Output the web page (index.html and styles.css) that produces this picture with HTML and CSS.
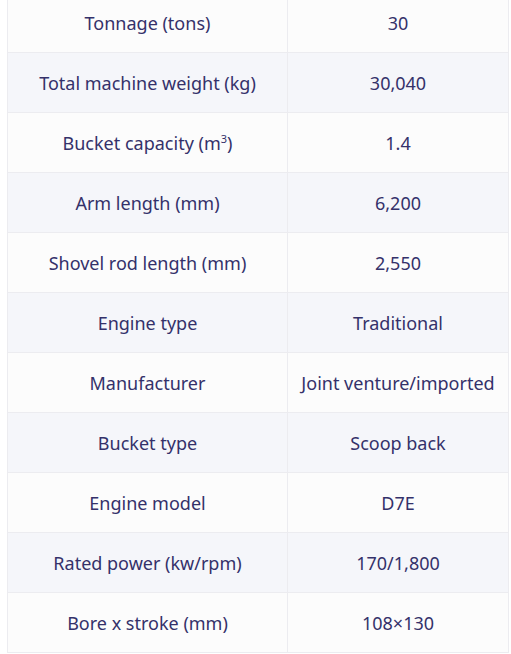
FILE: index.html
```html
<!DOCTYPE html>
<html>
<head>
<meta charset="utf-8">
<link rel="stylesheet" href="styles.css">
</head>
<body>
<table class="specs">
<tbody>
<tr><td>Tonnage (tons)</td><td>30</td></tr>
<tr class="alt"><td>Total machine weight (kg)</td><td>30,040</td></tr>
<tr><td>Bucket capacity (m<sup>3</sup>)</td><td>1.4</td></tr>
<tr class="alt"><td>Arm length (mm)</td><td>6,200</td></tr>
<tr><td>Shovel rod length (mm)</td><td>2,550</td></tr>
<tr class="alt"><td>Engine type</td><td>Traditional</td></tr>
<tr><td>Manufacturer</td><td>Joint venture/imported</td></tr>
<tr class="alt"><td>Bucket type</td><td>Scoop back</td></tr>
<tr><td>Engine model</td><td>D7E</td></tr>
<tr class="alt"><td>Rated power (kw/rpm)</td><td>170/1,800</td></tr>
<tr><td>Bore x stroke (mm)</td><td>108×130</td></tr>
</tbody>
</table>
</body>
</html>
```
FILE: styles.css
```css
html, body {
  margin: 0;
  padding: 0;
  background: #ffffff;
}
body {
  padding-left: 7px;
  overflow: hidden;
}
.specs {
  margin-top: -8px;
  width: 502px;
  border-collapse: collapse;
  table-layout: fixed;
  font-family: "Noto Sans", "Open Sans", sans-serif;
  font-size: 18px;
  color: #34316a;
}
.specs td {
  height: 60px;
  padding: 0 4px;
  border: 1px solid #ececf0;
  text-align: center;
  vertical-align: middle;
  background: #fcfcfc;
  box-sizing: border-box;
}
.specs td:first-child {
  width: 280px;
}
.specs tr.alt td {
  background: #f5f6fa;
}
.specs sup {
  font-size: 11px;
  line-height: 0;
  vertical-align: 7px;
}
```
